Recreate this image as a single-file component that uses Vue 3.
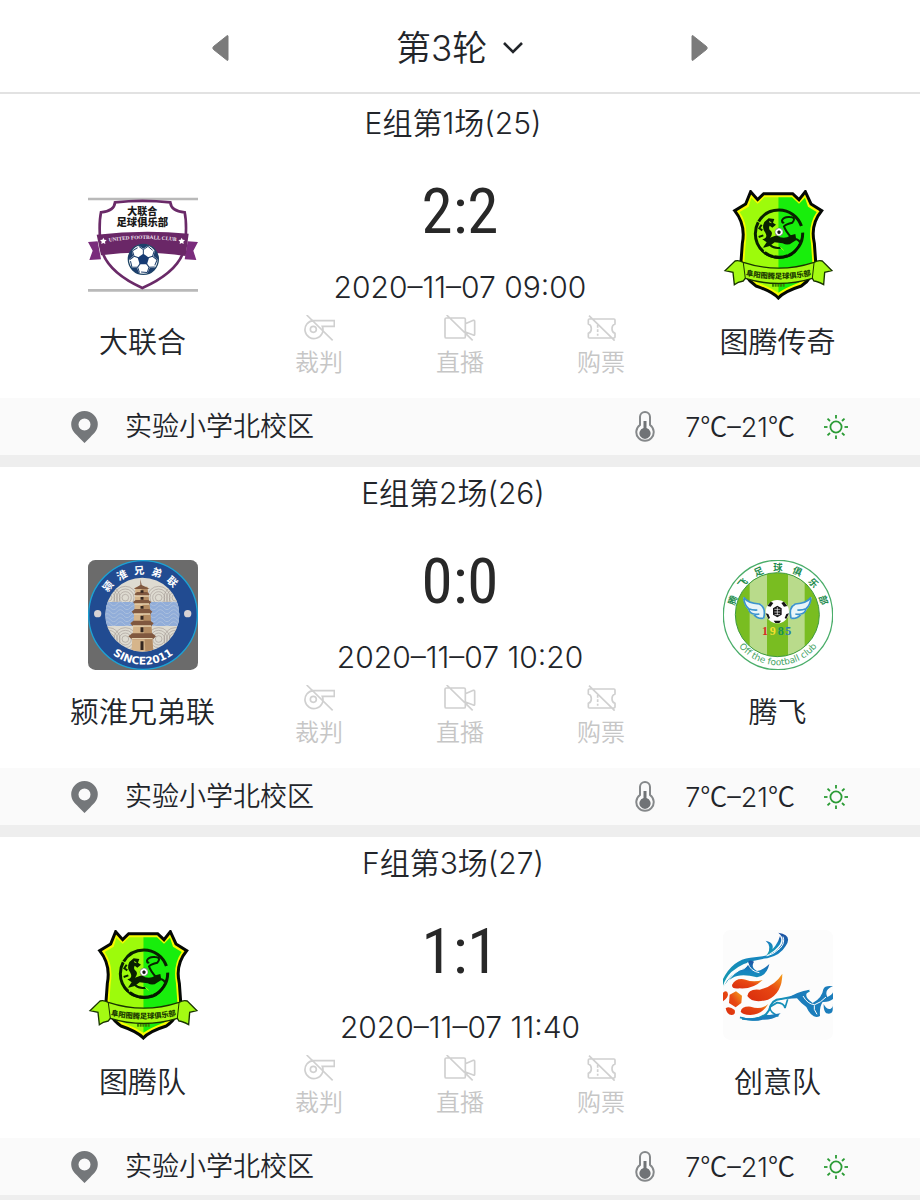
<script setup>
import { ref } from 'vue'

const round = ref('第3轮')

const matches = [
  { id: 25, title: 'E组第1场(25)', home: '大联合', homeLogo: 'united', away: '图腾传奇', awayLogo: 'totem', score: '2:2', time: '2020–11–07 09:00' },
  { id: 26, title: 'E组第2场(26)', home: '颍淮兄弟联', homeLogo: 'pagoda', away: '腾飞', awayLogo: 'wings', score: '0:0', time: '2020–11–07 10:20' },
  { id: 27, title: 'F组第3场(27)', home: '图腾队', homeLogo: 'totem', away: '创意队', awayLogo: 'flame', score: '1:1', time: '2020–11–07 11:40' }
].map((m) => ({
  ...m,
  teams: [
    { side: 'home', name: m.home, logo: m.homeLogo },
    { side: 'away', name: m.away, logo: m.awayLogo }
  ]
}))

const dots = [0, 72, 144, 216, 288]
const rays = [0, 45, 90, 135, 180, 225, 270, 315]

const spread = (text, from, step) => [...text].map((char, i) => ({ char, angle: from + i * step }))
const pagodaRing = spread('颍淮兄弟联', -50, 23)
const wingsRing = spread('腾飞足球俱乐部', -72, 24)
</script>

<template>
  <main class="page">
    <header class="rounds">
      <button class="arrow" type="button" aria-label="上一轮">
        <svg viewBox="0 0 18 26" width="18" height="26"><path d="M16 1.200v23.600q0 1-1 .4L1.500 14.500q-1.500-1.500 0-3L15 .8q1-.6 1 .4z" fill="#7b7b7b" stroke="#7b7b7b" /></svg>
      </button>
      <label class="picker">
        <select v-model="round" class="select" aria-label="轮次">
          <option>第3轮</option>
        </select>
        <svg class="chevron" viewBox="0 0 22 14" width="22" height="14"><path d="M2 2l9 9 9-9" fill="none" stroke="#22252a" stroke-width="2.600" /></svg>
      </label>
      <button class="arrow" type="button" aria-label="下一轮">
        <svg viewBox="0 0 18 26" width="18" height="26"><path d="M2 1.200v23.600q0 1 1 .4L16.500 14.500q1.500-1.500 0-3L3 .8q-1-.6-1 .4z" fill="#7b7b7b" stroke="#7b7b7b" /></svg>
      </button>
    </header>

    <article v-for="m in matches" :key="m.id" class="match">
      <h2 class="title">{{ m.title }}</h2>
      <div class="body">
        <section v-for="t in m.teams" :key="t.side" class="team" :class="t.side">
          <svg v-if="t.logo === 'united'" class="logo" viewBox="53 30 330 330">
            <path d="M53 57h331M53 331h331" stroke="#b9b9b9" stroke-width="8" />
            <path d="M134 67Q216 58 300 67Q302 93 343 97Q350 130 345 190Q337 270 216 324Q98 270 90 190Q85 130 92 97Q132 93 134 67z" fill="#fff" stroke="#6a2a68" stroke-width="8" />
            <path d="M82 184L53 186L67 212L57 240L92 238zM352 184L383 186L369 212L378 240L343 238z" fill="#7a2c7c" />
            <path d="M79 164Q216 148 355 161L346 228Q216 208 92 226z" fill="#6a2767" />
            <text x="216" y="104" class="black-text" font-size="30">大联合</text>
            <text x="216" y="137" class="black-text" font-size="31">足球俱乐部</text>
            <path id="united-arc" d="M108 187Q216 168 326 185" fill="none" />
            <text class="club-text"><textPath href="#united-arc" startOffset="50%">UNITED FOOTBALL CLUB</textPath></text>
            <path d="M99 173l3 6 7 1-5 5 1 7-6-3-6 3 1-7-5-5 7-1zM334 173l3 6 7 1-5 5 1 7-6-3-6 3 1-7-5-5 7-1z" fill="#fff" />
            <circle cx="219" cy="238" r="45" fill="#fff" stroke="#1e4565" stroke-width="4" />
            <g v-for="a in dots" :key="a" :transform="`rotate(${a} 219 238)`">
              <path d="M219 223V209M205 199l14 10 14-10M233 199l14 12" fill="none" stroke="#1d3f6d" stroke-width="3" />
              <path d="M203 196q16-7 32 0l-16 10z" fill="#1d3f6d" />
            </g>
            <path d="M219 221l17 12-6 20h-22l-6-20z" fill="#173b74" />
          </svg>

          <svg v-else-if="t.logo === 'totem'" class="logo" viewBox="69 30 330 330">
            <path d="M152 35L173 59L191 41H278L297 59L316 35L333 72L365 92Q330 134 343 190L347 245Q340 294 304 318Q253 334 235 354Q216 334 168 318Q130 292 123 245L127 190Q138 134 104 92L137 72z" fill="#f8fb00" stroke="#050805" stroke-width="9" />
            <path d="M154 53L173 71L193 52H235V338Q212 323 174 308Q137 290 133 245L137 190Q146 135 119 96L146 80z" fill="#9dfb0b" />
            <path d="M315 53L297 71L276 52H235V338Q257 323 296 308Q332 290 337 245L333 190Q323 135 350 96L324 80z" fill="#18ee0c" />
            <circle cx="237" cy="161" r="71" fill="none" stroke="#082100" stroke-width="9" stroke-dasharray="81 3 42 2 29 5 95 3 160 20" />
            <path d="M170 190Q190 226 237 230Q287 226 304 174Q299 235 237 237Q185 234 170 190" fill="#061600" />
            <path d="M193 126L206 115L223 117L219 128L228 134L217 143L209 137Q204 147 213 153Q220 161 210 173L230 166Q251 181 272 166L286 162L289 180L276 188Q264 198 248 190L224 187L209 198L188 204L200 187L187 178Q205 174 196 158Q184 144 193 126z" fill="#082000" />
            <path d="M274 172Q257 154 252 139Q258 132 277 128Q290 112 270 111Q252 109 246 121Q246 132 252 126M283 176Q300 178 301 192M210 195Q223 207 242 203M185 134L178 145L187 151M190 166L176 171" fill="none" stroke="#082400" stroke-width="6" />
            <path d="M207 125l7 3M241 202l10 9M180 193l10 9" stroke="#a4fa13" stroke-width="3" />
            <circle cx="237" cy="156" r="12" fill="#fff" stroke="#172014" stroke-width="1" />
            <path d="M237 151l5 4-2 6h-6l-2-6zM229 149l4-2M242 147l4 4M227 161l2 4M246 162l-2 4" fill="#161616" stroke="#161616" stroke-width="1" />
            <path d="M75 272L105 243Q117 240 130 247Q236 282 342 247Q354 240 367 243L396 272L374 277L371 314Q351 303 342 303L337 295Q236 326 136 295L130 303Q113 306 103 314L99 277z" fill="#a4fa13" stroke="#183400" stroke-width="4" />
            <path d="M130 249L136 295M342 249L337 295" stroke="#183400" stroke-width="3" />
            <path id="totem-arc" d="M129 284Q236 309 342 284" fill="none" />
            <text class="totem-text"><textPath href="#totem-arc" startOffset="50%">阜阳图腾足球俱乐部</textPath></text>
            <path d="M216 316h40" stroke="#3e8500" stroke-width="8" stroke-dasharray="6 2" />
          </svg>

          <svg v-else-if="t.logo === 'pagoda'" class="logo" viewBox="53 45 330 330">
            <rect x="53" y="45" width="330" height="330" rx="22" fill="#6b6b6b" />
            <circle cx="218" cy="210" r="163" fill="#214b91" stroke="#1ca3d5" stroke-width="4" />
            <clipPath id="pagoda-disc"><circle cx="216" cy="209" r="111" /></clipPath>
            <g clip-path="url(#pagoda-disc)">
              <path d="M100 90h240v240H100z" fill="#dedbd1" />
              <g fill="none" stroke="#a79f98" stroke-width="2">
                <g v-for="x in [115, 165, 265, 315]" :key="x">
                  <circle v-for="r in [10, 18, 26, 34]" :key="r" :cx="x" cy="158" :r="r" />
                  <circle v-for="r in [10, 18, 26, 34]" :key="r + 50" :cx="x" cy="282" :r="r" />
                </g>
              </g>
              <path d="M100 171h240v72H100z" fill="#91add9" />
              <path v-for="y in [172, 184, 196, 208, 220, 232]" :key="y" :d="`M100 ${y + 4}q10-12 20 0t20 0t20 0t20 0t20 0t20 0t20 0t20 0t20 0t20 0t20 0t20 0`" fill="none" stroke="#b8c8e0" stroke-width="2" />
              <path d="M195 126h36l8 73 10 121h-66l9-121z" fill="#d6b58b" />
              <path d="M213 125h18l9 73 9 122h-24z" fill="#b48c63" />
              <path d="M210 102l4 18 24 12h-48l20-12zM192 148l8-7h30l8 7-5 5h-36zM188 171l8-6h38l9 6-6 6h-44zM184 200l9-8h44l9 8-6 7h-50zM180 235l9-8h51l10 8-7 8h-57zM174 274l12-9h60l11 9-9 9h-64z" fill="#80583f" />
              <path d="M193 153h42M192 177h44M190 207h49M187 243h55M184 281h63" stroke="#e5d0ad" stroke-width="4" />
              <path d="M215 136v7M215 156v8M215 183v8M215 212v12M215 247v15M215 289v26" stroke="#33251f" stroke-width="9" />
            </g>
            <circle cx="82" cy="206" r="11" fill="#d9d3d3" /><circle cx="352" cy="206" r="11" fill="#d9d3d3" />
            <text v-for="c in pagodaRing" :key="c.char" x="216" y="87" class="pagoda-text" :transform="`rotate(${c.angle} 216 210)`">{{ c.char }}</text>
            <path id="pagoda-bottom" d="M90 288A151 151 0 0 0 346 288" fill="none" />
            <text class="since-text"><textPath href="#pagoda-bottom" startOffset="50%">SINCE2011</textPath></text>
          </svg>

          <svg v-else-if="t.logo === 'wings'" class="logo" viewBox="69 45 330 330">
            <circle cx="234" cy="210" r="164" fill="#fff" stroke="#4aad69" stroke-width="4" />
            <clipPath id="wings-disc"><circle cx="232" cy="209" r="126" /></clipPath>
            <g clip-path="url(#wings-disc)">
              <path d="M100 80h270v260H100z" fill="#79bd21" />
              <path d="M149 80h52v260h-52zM264 80h50v260h-50z" fill="#b9db8b" />
            </g>
            <circle cx="232" cy="209" r="126" fill="none" stroke="#3e9a3e" stroke-width="3" />
            <g v-for="side in [1, -1]" :key="side" :transform="side === 1 ? undefined : 'translate(464 0) scale(-1 1)'">
              <path d="M129 156Q141 174 185 178Q198 188 192 220Q188 226 178 218Q165 216 159 207Q146 203 144 193Q133 184 129 156z" fill="#e9f5f9" />
              <path d="M131 157Q143 175 178 177Q199 187 191 220M131 160Q134 182 146 191Q158 196 172 195M146 193Q150 206 162 207Q170 209 178 207M162 209Q172 222 190 220" fill="none" stroke="#3b93cd" stroke-width="5" />
            </g>
            <circle cx="232" cy="200" r="35" fill="#fff" />
            <path d="M219 190l13-8 13 8v19l-13 8-13-8zM202 183l10-13 8 4-8 11zM262 183l-10-13-8 4 8 11zM197 205l8 2 5 12-5 3zM267 205l-8 2-5 12 5 3zM221 227h22l-5 7h-12z" fill="#151515" />
            <path d="M223 193h18M223 201h18M232 186v24M224 209h16" stroke="#fff" stroke-width="2" />
            <text y="269" class="year-text"><tspan x="186" fill="#d82b24">1</tspan><tspan x="209" fill="#f3df30">9</tspan><tspan x="233" fill="#159154">8</tspan><tspan x="256" fill="#2a78b8">5</tspan></text>
            <text v-for="c in wingsRing" :key="c.char" x="234" y="77" class="wings-text" :transform="`rotate(${c.angle} 234 210)`">{{ c.char }}</text>
            <path id="wings-bottom" d="M92 259A150 150 0 0 0 376 259" fill="none" />
            <text class="off-text"><textPath href="#wings-bottom" startOffset="50%">Off the football club</textPath></text>
          </svg>

          <svg v-else class="logo" viewBox="69 46 330 330">
            <defs>
              <linearGradient id="flame-blue" x1="0" y1="0" x2="0" y2="1"><stop offset="0" stop-color="#1d4fa0" /><stop offset="0.400" stop-color="#1684c0" /><stop offset="1" stop-color="#159cac" /></linearGradient>
              <linearGradient id="flame-red" x1="0" y1="1" x2="1" y2="0"><stop offset="0" stop-color="#d92c0d" /><stop offset="0.600" stop-color="#e84812" /><stop offset="1" stop-color="#f6a51d" /></linearGradient>
            </defs>
            <rect x="69" y="46" width="330" height="330" rx="22" fill="#fcfcfc" />
            <g fill="url(#flame-blue)">
              <path d="M235 54Q279 61 257 94Q242 121 202 131Q131 139 94 172Q77 189 69 213V193Q98 135 151 129L188 125Q227 119 244 91Q256 72 235 54z" />
              <path d="M240 64Q250 81 234 96Q217 115 199 120Q232 96 240 64zM197 78Q229 85 213 113Q209 120 201 121Q217 95 197 78z" />
              <path d="M69 219Q88 179 125 164Q142 158 145 147Q144 131 162 141Q151 158 171 169Q186 169 208 148Q200 184 171 188Q121 175 97 190Q80 200 69 219z" />
            </g>
            <path d="M76 211Q105 165 132 162Q142 156 143 144Q151 170 178 174M249 66Q256 85 240 101Q222 119 200 124" fill="none" stroke="#fff" stroke-width="3" />
            <g fill="url(#flame-red)">
              <path d="M96 211Q108 188 137 195Q159 204 188 196Q159 224 119 221Q95 224 96 211z" />
              <path d="M142 244Q145 221 179 225Q224 214 247 177Q247 234 204 255Q158 268 142 244z" />
              <path d="M122 291Q125 274 152 276Q183 287 205 268Q186 300 151 301Q127 300 122 291z" />
              <path d="M89 240L108 230L126 243L124 265L107 278L87 265zM69 234Q82 224 84 239Q84 250 69 260zM77 281Q87 272 104 286Q108 300 96 301Q81 302 77 281z" />
            </g>
            <path d="M120 308Q183 329 207 287Q215 252 244 253L278 246Q315 237 328 228" fill="none" stroke="#168fb8" stroke-width="6" />
            <path d="M126 313Q165 317 189 303L235 304Q205 290 211 276L231 264Q252 265 255 280L263 254" fill="none" stroke="#168fb8" stroke-width="5" />
            <path d="M120 307Q170 318 194 303L242 296Q226 316 188 315Q151 325 120 307zM261 252Q289 231 330 225Q304 243 338 265Q366 251 370 224Q375 211 399 215Q371 225 382 247Q398 239 399 233V253Q387 263 368 262Q358 276 360 304Q337 316 319 277Q302 265 291 251Q278 252 261 252zM371 268Q379 285 391 283Q400 278 396 268Q405 303 379 296Q370 289 371 268z" fill="#1b7dbb" />
            <path d="M309 244Q323 269 344 270Q362 264 378 247M343 272Q339 283 351 299" fill="none" stroke="#fff" stroke-width="3" />
          </svg>
          <span class="name">{{ t.name }}</span>
        </section>

        <section class="center">
          <strong class="score">{{ m.score }}</strong>
          <time class="time">{{ m.time }}</time>
          <div class="actions">
            <button class="action" type="button">
              <svg class="glyph" viewBox="69 434 96 78"><path d="M100 451h63v17h-36a27 27 0 1 1-27-17zM80 434l78 76" /><circle cx="100" cy="477" r="9" /></svg>
              <span>裁判</span>
            </button>
            <button class="action" type="button">
              <svg class="glyph" viewBox="492 431 96 78"><path d="M499 440h53q4 0 4 4v52q0 4-4 4h-53q-4 0-4-4v-52q0-4 4-4zM556 457l24-10q4-1 4 3v39q0 4-4 2l-24-9M500 431l78 76" /></svg>
              <span>直播</span>
            </button>
            <button class="action" type="button">
              <svg class="glyph" viewBox="915 434 96 78"><path d="M928 446h74q3 0 3 3v12q-9 3-9 14t9 14v11q0 3-3 3h-74q-3 0-3-3v-11q9-3 9-14t-9-14v-12q0-3 3-3zM927 436l77 75" /><path d="M953 464v32" stroke-dasharray="8 5" /></svg>
              <span>购票</span>
            </button>
          </div>
        </section>
      </div>

      <footer class="info">
        <svg class="pin" viewBox="0 0 27 32" width="27" height="32"><path fill-rule="evenodd" d="M13.500 0a13.300 13.300 0 0 1 13.300 13.300c0 6-3.800 9-7.300 12.700l-6 6-6-6C4 22.300.2 19.300.2 13.300A13.300 13.300 0 0 1 13.500 0zm0 7.500a6 6 0 1 0 0 12 6 6 0 1 0 0-12z" fill="#74777a" /></svg>
        <span class="venue">实验小学北校区</span>
        <svg class="thermo" viewBox="0 0 20 32" width="20" height="32"><path d="M5 14V6a5 5 0 0 1 10 0v8a8.700 8.700 0 1 1-10 0z" fill="none" stroke="#85888a" stroke-width="2" /><path d="M8.500 10h3v7a5.600 5.600 0 1 1-3 0z" fill="#707376" /></svg>
        <span class="temp">7<span class="unit">℃</span>–21<span class="unit">℃</span></span>
        <svg class="sun" viewBox="0 0 26 26" width="26" height="26">
          <circle cx="13" cy="13" r="5.600" />
          <path v-for="a in rays" :key="a" d="M13 1v3.500" :transform="`rotate(${a} 13 13)`" />
        </svg>
      </footer>
    </article>
  </main>
</template>

<style>
body {
  margin: 0;
  background: #fff;
}
</style>

<style scoped>
.page {
  height: 100vh;
  overflow: hidden;
  color: #22252a;
  font-family: Inter, "Noto Sans CJK SC", sans-serif;
  font-weight: 350;
  background: #fff;
}

.rounds {
  display: flex;
  align-items: center;
  justify-content: space-between;
  height: 88px;
  margin-bottom: 3px;
  padding: 4px 23% 0;
  border-bottom: 2px solid #e2e2e2;
}

button {
  padding: 0;
  border: 0;
  background: none;
  color: inherit;
  font: inherit;
}

.arrow {
  display: flex;
}

.picker {
  display: flex;
  align-items: center;
  gap: 14px;
}

.select {
  appearance: none;
  padding: 0;
  border: 0;
  background: none;
  color: inherit;
  font: inherit;
  font-size: 35px;
  line-height: 48px;
}

.match {
  border-bottom: 12px solid #eee;
}

.title {
  margin: 0;
  padding-right: 14px;
  font-size: 30px;
  font-weight: inherit;
  line-height: 52px;
  text-align: center;
}

.body {
  display: grid;
  grid-template-columns: 1fr 350px 1fr;
  padding: 32px 0 20px;
}

.team,
.center {
  display: flex;
  flex-direction: column;
  align-items: center;
  grid-row: 1;
}

.team {
  gap: 24px;
  padding-top: 9px;
}

.home {
  grid-column: 1;
}

.away {
  grid-column: 3;
}

.center {
  grid-column: 2;
}

.logo {
  width: 110px;
  height: 110px;
}

.name {
  font-size: 29px;
  line-height: 38px;
}

.score {
  color: #282828;
  font-family: "Roboto Condensed", Roboto, sans-serif;
  font-size: 63px;
  font-weight: 450;
  line-height: 62px;
}

.time {
  margin-top: 28px;
  font-size: 30px;
  line-height: 32px;
}

.actions {
  display: flex;
  justify-content: space-between;
  align-self: stretch;
  margin-top: 12px;
  padding: 0 10px;
}

.action {
  display: flex;
  flex-direction: column;
  align-items: center;
  gap: 7px;
  color: #c6c6c6;
  font-size: 24px;
  line-height: 30px;
}

.glyph {
  width: 32px;
  height: 26px;
  fill: none;
  stroke: #d0d0d0;
  stroke-width: 5;
}

.info {
  display: flex;
  align-items: center;
  height: 57px;
  padding: 0 71px;
  background: #fafafa;
  font-size: 27px;
}

.venue {
  flex: 1;
  margin-left: 27px;
  padding-bottom: 4px;
}

.temp {
  margin: 0 28px 0 30px;
  font-size: 27px;
  line-height: 36px;
}

.unit {
  font-family: "Noto Sans CJK SC", sans-serif;
  font-size: 27px;
}

.sun {
  fill: none;
  stroke: #2b9b35;
  stroke-width: 1.800;
}

.black-text,
.club-text,
.totem-text,
.pagoda-text,
.since-text,
.year-text,
.wings-text,
.off-text {
  text-anchor: middle;
  font-family: "Noto Sans CJK SC", sans-serif;
  font-weight: 900;
}

.black-text {
  fill: #181818;
}

.club-text {
  fill: #efe2ef;
  font-family: "Liberation Serif", serif;
  font-size: 16px;
  font-weight: 700;
}

.totem-text {
  fill: #1c3d00;
  font-size: 22px;
}

.pagoda-text {
  fill: #fff;
  font-size: 31px;
  font-weight: 700;
}

.since-text {
  fill: #fff;
  font-family: "DejaVu Sans", sans-serif;
  font-size: 32px;
}

.year-text {
  text-anchor: start;
  font-family: "Liberation Serif", serif;
  font-size: 36px;
}

.wings-text {
  fill: #218b4c;
  font-size: 28px;
  font-weight: 700;
}

.off-text {
  fill: #42a262;
  font-family: "DejaVu Sans", sans-serif;
  font-size: 27px;
  font-weight: 400;
}
</style>
